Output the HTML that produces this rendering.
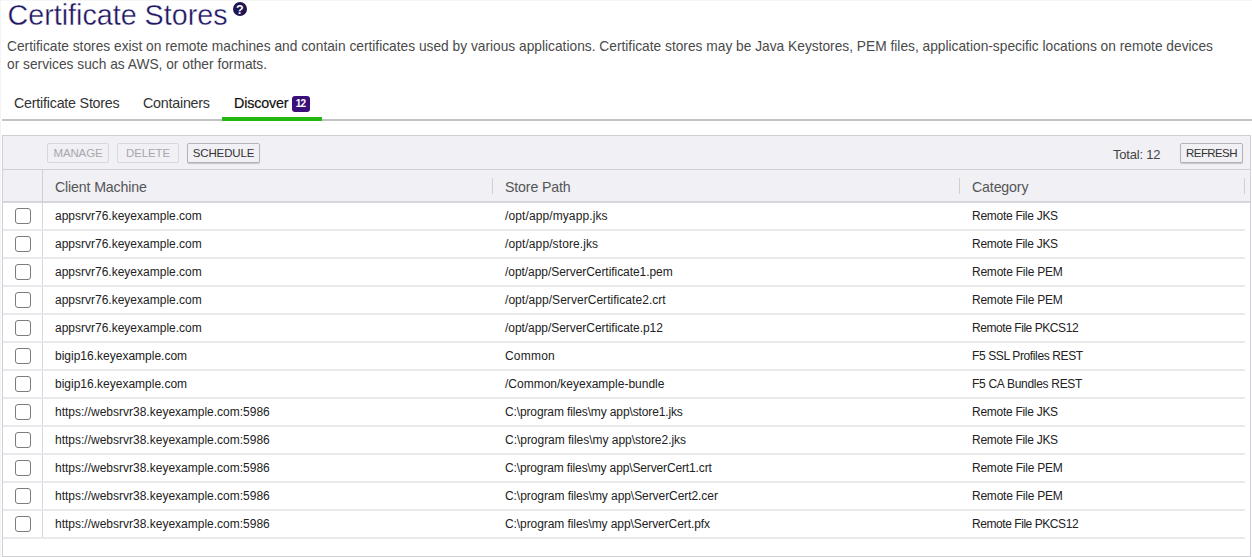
<!DOCTYPE html>
<html><head><meta charset="utf-8">
<style>
*{box-sizing:border-box;margin:0;padding:0}
html,body{width:1252px;height:557px;overflow:hidden;background:#fff;font-family:"Liberation Sans",sans-serif}
.abs{position:absolute;white-space:nowrap}
#title{left:7.5px;top:-1px;font-size:28.7px;line-height:32px;color:#211663;-webkit-text-stroke:0.35px #fff}
#help{left:233px;top:2.2px;width:14px;height:14px;border-radius:50%;background:#1f1552;color:#fff;font-size:12.5px;font-weight:bold;line-height:16px;text-align:center;text-indent:-0.5px}
.desc{left:7px;font-size:13.75px;line-height:17px;color:#4a4a4a}
.tab{font-size:14.3px;line-height:16px;top:95px;color:#333}
#badge{left:292px;top:96px;width:18px;height:16px;border-radius:3px;background:#3b0f7a;color:#fff;font-size:10px;font-weight:bold;letter-spacing:-0.8px;text-indent:-0.8px;line-height:16px;text-align:center}
#tabline{left:2px;top:119px;width:1250px;height:2px;background:#c2c2c8}
#green{left:222px;top:117px;width:100px;height:4px;background:#23b80f}
#grid{left:2px;top:135px;width:1249px;height:422px;border:1px solid #cfd0d5;background:#fff}
#toolbar{left:0;top:0;width:1247px;height:34px;background:#f0f0f5;border-bottom:1px solid #cfd0d5}
.btn{top:7px;height:20px;border:1px solid #d7d8dd;border-radius:2px;font-size:11.5px;letter-spacing:-0.15px;line-height:19px;text-align:center;color:#a8a8ac;background:#f0f0f5}
.btn.on{border-color:#b4b5ba;color:#333;box-shadow:0 1px 1px rgba(0,0,0,.18)}
#hdr{left:0;top:34px;width:1247px;height:33px;background:#f0f0f5;border-bottom:2px solid #d6d7dc}
.hcol{top:0.5px;font-size:14.2px;letter-spacing:-0.15px;line-height:32px;color:#555}
.hsep{top:8px;width:1px;height:16px;background:#cfd0d5}
.row{left:0;width:1242px;height:28px;border-bottom:2px solid #e8e9ec}
.cell{font-size:12px;line-height:27px;color:#222}
.cb{left:12px;top:5px;width:16px;height:16px;border:1.5px solid #7a7c80;border-radius:3px;background:#fff}
.vsep{left:39px;width:1px;background:#d6d7dc}
</style></head><body>
<div class="abs" style="left:0;top:0;width:1252px;height:1px;background:#f5f5f6"></div>
<div class="abs" style="left:0;top:0;width:1px;height:557px;background:#f4f4f5"></div>
<div id="title" class="abs">Certificate Stores</div>
<div id="help" class="abs">?</div>
<div class="abs desc" style="top:38px">Certificate stores exist on remote machines and contain certificates used by various applications. Certificate stores may be Java Keystores, PEM files, application-specific locations on remote devices</div>
<div class="abs desc" style="top:55.6px">or services such as AWS, or other formats.</div>

<div class="abs tab" style="left:14px;letter-spacing:-0.23px">Certificate Stores</div>
<div class="abs tab" style="left:143px;letter-spacing:-0.24px">Containers</div>
<div class="abs tab" style="left:234px;color:#111;letter-spacing:-0.15px;-webkit-text-stroke:0.2px #111">Discover</div>
<div id="badge" class="abs">12</div>
<div id="tabline" class="abs"></div>
<div id="green" class="abs"></div>

<div id="grid" class="abs">
  <div id="toolbar" class="abs">
    <div class="abs btn" style="left:44px;width:62px">MANAGE</div>
    <div class="abs btn" style="left:114px;width:62px">DELETE</div>
    <div class="abs btn on" style="left:184px;width:73px">SCHEDULE</div>
    <div class="abs" style="left:1110px;top:1.5px;font-size:13px;letter-spacing:-0.2px;line-height:34px;color:#444">Total: 12</div>
    <div class="abs btn on" style="left:1177px;width:63px;letter-spacing:-0.6px">REFRESH</div>
  </div>
  <div id="hdr" class="abs">
    <div class="abs" style="left:39px;top:0;width:1px;height:33px;background:#cfd0d5"></div>
    <div class="abs hcol" style="left:52px">Client Machine</div>
    <div class="abs hsep" style="left:489px"></div>
    <div class="abs hcol" style="left:502px">Store Path</div>
    <div class="abs hsep" style="left:956px"></div>
    <div class="abs hcol" style="left:969px">Category</div>
    <div class="abs hsep" style="left:1241px"></div>
  </div>
  <div id="rows" class="abs" style="left:0;top:67px;width:1247px">
<div class="abs row" style="top:0px"><div class="abs vsep" style="top:0;height:26px"></div><div class="abs cb"></div><div class="abs cell" style="left:52px;letter-spacing:0.000px">appsrvr76.keyexample.com</div><div class="abs cell" style="left:502px;letter-spacing:0.106px">/opt/app/myapp.jks</div><div class="abs cell" style="left:969px;letter-spacing:-0.279px">Remote File JKS</div></div>
<div class="abs row" style="top:28px"><div class="abs vsep" style="top:0;height:26px"></div><div class="abs cb"></div><div class="abs cell" style="left:52px;letter-spacing:0.000px">appsrvr76.keyexample.com</div><div class="abs cell" style="left:502px;letter-spacing:0.100px">/opt/app/store.jks</div><div class="abs cell" style="left:969px;letter-spacing:-0.279px">Remote File JKS</div></div>
<div class="abs row" style="top:56px"><div class="abs vsep" style="top:0;height:26px"></div><div class="abs cb"></div><div class="abs cell" style="left:52px;letter-spacing:0.000px">appsrvr76.keyexample.com</div><div class="abs cell" style="left:502px;letter-spacing:-0.057px">/opt/app/ServerCertificate1.pem</div><div class="abs cell" style="left:969px;letter-spacing:-0.236px">Remote File PEM</div></div>
<div class="abs row" style="top:84px"><div class="abs vsep" style="top:0;height:26px"></div><div class="abs cb"></div><div class="abs cell" style="left:52px;letter-spacing:0.000px">appsrvr76.keyexample.com</div><div class="abs cell" style="left:502px;letter-spacing:0.043px">/opt/app/ServerCertificate2.crt</div><div class="abs cell" style="left:969px;letter-spacing:-0.236px">Remote File PEM</div></div>
<div class="abs row" style="top:112px"><div class="abs vsep" style="top:0;height:26px"></div><div class="abs cb"></div><div class="abs cell" style="left:52px;letter-spacing:0.000px">appsrvr76.keyexample.com</div><div class="abs cell" style="left:502px;letter-spacing:-0.052px">/opt/app/ServerCertificate.p12</div><div class="abs cell" style="left:969px;letter-spacing:-0.441px">Remote File PKCS12</div></div>
<div class="abs row" style="top:140px"><div class="abs vsep" style="top:0;height:26px"></div><div class="abs cb"></div><div class="abs cell" style="left:52px;letter-spacing:0.000px">bigip16.keyexample.com</div><div class="abs cell" style="left:502px;letter-spacing:0.200px">Common</div><div class="abs cell" style="left:969px;letter-spacing:-0.374px">F5 SSL Profiles REST</div></div>
<div class="abs row" style="top:168px"><div class="abs vsep" style="top:0;height:26px"></div><div class="abs cb"></div><div class="abs cell" style="left:52px;letter-spacing:0.000px">bigip16.keyexample.com</div><div class="abs cell" style="left:502px">/Common/keyexample-bundle</div><div class="abs cell" style="left:969px;letter-spacing:-0.294px">F5 CA Bundles REST</div></div>
<div class="abs row" style="top:196px"><div class="abs vsep" style="top:0;height:26px"></div><div class="abs cb"></div><div class="abs cell" style="left:52px">https://websrvr38.keyexample.com:5986</div><div class="abs cell" style="left:502px;letter-spacing:-0.127px">C:\program files\my app\store1.jks</div><div class="abs cell" style="left:969px;letter-spacing:-0.279px">Remote File JKS</div></div>
<div class="abs row" style="top:224px"><div class="abs vsep" style="top:0;height:26px"></div><div class="abs cb"></div><div class="abs cell" style="left:52px">https://websrvr38.keyexample.com:5986</div><div class="abs cell" style="left:502px;letter-spacing:-0.030px">C:\program files\my app\store2.jks</div><div class="abs cell" style="left:969px;letter-spacing:-0.279px">Remote File JKS</div></div>
<div class="abs row" style="top:252px"><div class="abs vsep" style="top:0;height:26px"></div><div class="abs cb"></div><div class="abs cell" style="left:52px">https://websrvr38.keyexample.com:5986</div><div class="abs cell" style="left:502px;letter-spacing:-0.137px">C:\program files\my app\ServerCert1.crt</div><div class="abs cell" style="left:969px;letter-spacing:-0.236px">Remote File PEM</div></div>
<div class="abs row" style="top:280px"><div class="abs vsep" style="top:0;height:26px"></div><div class="abs cb"></div><div class="abs cell" style="left:52px">https://websrvr38.keyexample.com:5986</div><div class="abs cell" style="left:502px;letter-spacing:-0.066px">C:\program files\my app\ServerCert2.cer</div><div class="abs cell" style="left:969px;letter-spacing:-0.236px">Remote File PEM</div></div>
<div class="abs row" style="top:308px"><div class="abs vsep" style="top:0;height:26px"></div><div class="abs cb"></div><div class="abs cell" style="left:52px">https://websrvr38.keyexample.com:5986</div><div class="abs cell" style="left:502px;letter-spacing:-0.081px">C:\program files\my app\ServerCert.pfx</div><div class="abs cell" style="left:969px;letter-spacing:-0.441px">Remote File PKCS12</div></div>
  </div>
</div>
</body></html>
